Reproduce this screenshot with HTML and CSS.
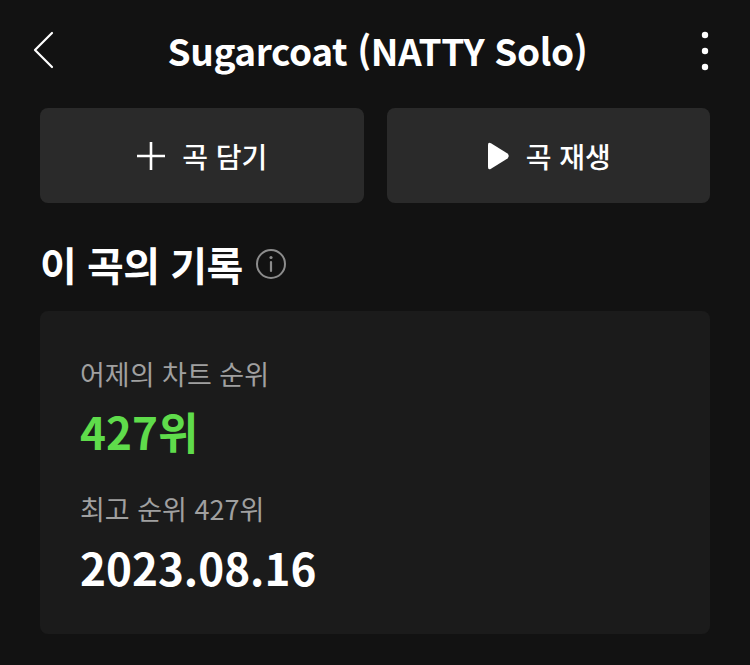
FILE: index.html
```html
<!DOCTYPE html>
<html lang="ko">
<head>
    <meta charset="UTF-8">
    <meta name="viewport" content="width=device-width, initial-scale=1.0">
    <title>Sugarcoat (NATTY Solo)</title>
    <link rel="stylesheet" href="styles.css">
</head>
<body>

<div class="screen">
    <!-- 상단 바 -->
    <div class="top-bar">
        <button class="icon-button back">
            <svg width="24" height="40" viewBox="0 0 24 40">
                <polyline points="20,3 3,20 20,37" fill="none" stroke="#fff" stroke-width="2.2" stroke-linecap="round" stroke-linejoin="round"/>
            </svg>
        </button>
        <h1 class="title">Sugarcoat (NATTY Solo)</h1>
        <button class="icon-button more">
            <svg width="12" height="42" viewBox="0 0 12 42">
                <circle cx="6" cy="5" r="3.2" fill="#fff"/>
                <circle cx="6" cy="21" r="3.2" fill="#fff"/>
                <circle cx="6" cy="37" r="3.2" fill="#fff"/>
            </svg>
        </button>
    </div>

    <!-- 담기 / 재생 버튼 -->
    <div class="actions">
        <button class="action">
            <svg width="30" height="30" viewBox="0 0 30 30">
                <path d="M15 1 V29 M1 15 H29" stroke="#fff" stroke-width="2.6" fill="none"/>
            </svg>
            <span>곡 담기</span>
        </button>
        <button class="action">
            <svg width="24" height="30" viewBox="0 0 24 30">
                <path d="M2 4 Q2 0.5 5 2.2 L21.5 12.6 Q24 15 21.5 17.4 L5 27.8 Q2 29.5 2 26 Z" fill="#fff"/>
            </svg>
            <span>곡 재생</span>
        </button>
    </div>

    <!-- 이 곡의 기록 -->
    <div class="section-head">
        <h2>이 곡의 기록</h2>
        <svg class="info" width="32" height="32" viewBox="0 0 32 32">
            <circle cx="16" cy="16" r="14" fill="none" stroke="#8c8c8c" stroke-width="2"/>
            <circle cx="16" cy="9.5" r="1.6" fill="#8c8c8c"/>
            <path d="M16 14 V23" stroke="#8c8c8c" stroke-width="2.2" stroke-linecap="round"/>
        </svg>
    </div>

    <div class="card">
        <div class="label">어제의 차트 순위</div>
        <div class="rank">427위</div>
        <div class="label best">최고 순위 427위</div>
        <div class="date">2023.08.16</div>
    </div>
</div>

</body>
</html>
```

FILE: styles.css
```css
body {
    margin: 0;
    background-color: #121212;
    color: #fff;
    font-family: "Noto Sans CJK KR", "Noto Sans", sans-serif;
}
.screen {
    width: 750px;
    height: 665px;
    padding: 0 40px;
    box-sizing: border-box;
}
.top-bar {
    height: 104px;
    display: flex;
    align-items: center;
    justify-content: space-between;
}
.icon-button {
    background: none;
    border: none;
    padding: 0;
    display: flex;
    align-items: center;
}
.back {
    margin-left: -8px;
    margin-top: -4px;
}
.more {
    margin-right: -1px;
    margin-top: -2px;
}
.title {
    margin: 0;
    font-size: 37px;
    font-weight: 700;
    letter-spacing: -0.4px;
    line-height: 1;
    margin-top: -4px;
}
.actions {
    display: grid;
    grid-template-columns: 1fr 1fr;
    gap: 23px;
    margin-top: 4px;
}
.action {
    height: 95px;
    background-color: #2a2a2a;
    border: none;
    border-radius: 8px;
    color: #fff;
    font-family: "Noto Sans CJK KR", sans-serif;
    font-size: 28px;
    font-weight: 500;
    display: flex;
    align-items: center;
    justify-content: center;
    gap: 16px;
}
.section-head {
    display: flex;
    align-items: center;
    gap: 12px;
    margin-top: 36px;
    height: 50px;
}
.section-head h2 {
    margin: 0;
    font-size: 40px;
    font-weight: 700;
    letter-spacing: -0.5px;
    line-height: 50px;
}
.card {
    margin-top: 22px;
    background-color: #1b1b1b;
    border-radius: 8px;
    padding: 46px 40px 41px;
}
.label {
    color: #a0a0a0;
    font-size: 27px;
    line-height: 34px;
}
.rank {
    color: #5fdc4b;
    font-size: 44px;
    font-weight: 700;
    line-height: 52px;
    margin-top: 14px;
}
.label.best {
    margin-top: 35px;
}
.date {
    font-size: 44px;
    font-weight: 700;
    line-height: 52px;
    margin-top: 15px;
}
```
